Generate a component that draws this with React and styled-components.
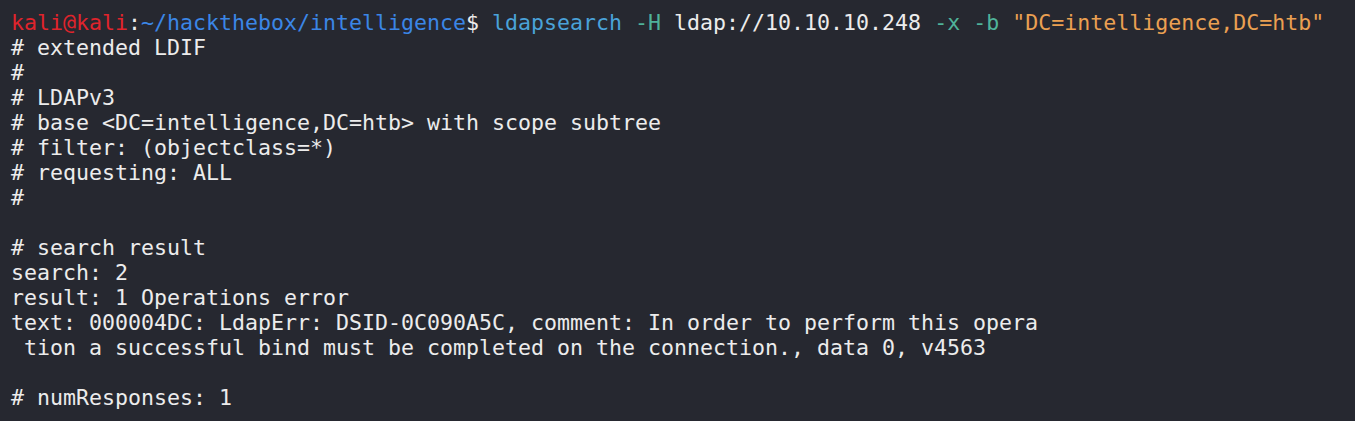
import React from "react";
import styled, { createGlobalStyle } from "styled-components";

const Global = createGlobalStyle`
  html, body { margin: 0; padding: 0; background: #262830; }
`;

const Terminal = styled.div`
  background: #262830;
  width: 1355px;
  height: 421px;
  box-sizing: border-box;
  padding: 10px 11px;
  font-family: "DejaVu Sans Mono", "Liberation Mono", monospace;
  font-size: 21.6px;
  line-height: 25px;
  color: #ececec;
  overflow: hidden;
`;

const Line = styled.div`
  white-space: pre;
  height: 25px;
`;

const colors = {
  user: "#e0242c",
  path: "#3b86e6",
  cmd: "#4aa2d9",
  flag: "#4fb39a",
  str: "#eba052",
  plain: "#ececec",
};

const Tok = styled.span`
  color: ${(p) => colors[p.$c] || colors.plain};
`;

const output = [
  "# extended LDIF",
  "#",
  "# LDAPv3",
  "# base <DC=intelligence,DC=htb> with scope subtree",
  "# filter: (objectclass=*)",
  "# requesting: ALL",
  "#",
  "",
  "# search result",
  "search: 2",
  "result: 1 Operations error",
  "text: 000004DC: LdapErr: DSID-0C090A5C, comment: In order to perform this opera",
  " tion a successful bind must be completed on the connection., data 0, v4563",
  "",
  "# numResponses: 1",
];

export default function App() {
  return (
    <>
      <Global />
      <Terminal>
        <Line>
          <Tok $c="user">kali@kali</Tok>
          <Tok $c="plain">:</Tok>
          <Tok $c="path">~/hackthebox/intelligence</Tok>
          <Tok $c="plain">$ </Tok>
          <Tok $c="cmd">ldapsearch</Tok>
          <Tok $c="plain"> </Tok>
          <Tok $c="flag">-H</Tok>
          <Tok $c="plain"> ldap://10.10.10.248 </Tok>
          <Tok $c="flag">-x</Tok>
          <Tok $c="plain"> </Tok>
          <Tok $c="flag">-b</Tok>
          <Tok $c="plain"> </Tok>
          <Tok $c="str">"DC=intelligence,DC=htb"</Tok>
        </Line>
        {output.map((l, i) => (
          <Line key={i}>{l}</Line>
        ))}
      </Terminal>
    </>
  );
}
